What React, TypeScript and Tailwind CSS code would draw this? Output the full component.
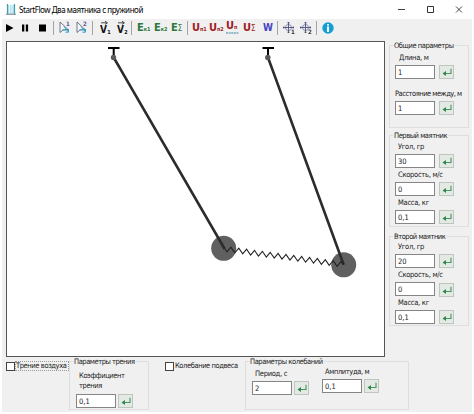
import type { ReactNode } from "react";

function EnterButton({ className = "" }: { className?: string }) {
  return (
    <button
      className={`flex h-[14px] w-[15px] shrink-0 items-center justify-center border border-[#bfc5bf] bg-[#e3e9e3] ${className}`}
    >
      <svg width="10" height="9" viewBox="0 0 10 9">
        <path d="M9 0.8V5.5H2.5" fill="none" stroke="#4b9362" strokeWidth="1.1" />
        <path d="M0.5 5.5L4 2.9V8.1Z" fill="#2f8550" />
      </svg>
    </button>
  );
}

type FieldProps = {
  label: string;
  value: string;
  labelClass?: string;
  className?: string;
  buttonClass?: string;
  gap?: string;
};

function Field({
  label,
  value,
  labelClass = "ml-[3px] tracking-[-0.28px]",
  className = "",
  buttonClass = "",
  gap = "gap-[4px]",
}: FieldProps) {
  return (
    <div className={`flex flex-col ${className}`}>
      <span className={`h-[12px] leading-[10px] whitespace-pre-line ${labelClass}`}>{label}</span>
      <div className={`flex ${gap}`}>
        <input
          defaultValue={value}
          className="h-[14px] w-[40px] shrink-0 border border-[#858585] bg-white px-[2px] leading-[10px] outline-none"
        />
        <EnterButton className={buttonClass} />
      </div>
    </div>
  );
}

function Group({
  title,
  titleClass = "tracking-[-0.45px]",
  className,
  children,
}: {
  title: string;
  titleClass?: string;
  className: string;
  children: ReactNode;
}) {
  return (
    <section className={`flex flex-col items-start border border-[#dedede] ${className}`}>
      <h2 className={`-mt-[5px] ml-[3px] h-[10px] bg-[#f0f0f0] px-px leading-[10px] ${titleClass}`}>
        {title}
      </h2>
      {children}
    </section>
  );
}

function CheckOption({
  label,
  focused = false,
  labelClass,
}: {
  label: string;
  focused?: boolean;
  labelClass: string;
}) {
  return (
    <label className="flex h-[10px] items-center">
      <span className="h-[9px] w-[9px] shrink-0 border border-[#444] bg-white" />
      <span
        className={`h-[10px] pl-px leading-[9px] ${labelClass} ${
          focused ? "outline-1 -outline-offset-1 outline-dotted outline-[#999]" : ""
        }`}
      >
        {label}
      </span>
    </label>
  );
}

function Separator({ className }: { className: string }) {
  return <span className={`h-[14px] w-px shrink-0 bg-[#a5a5a5] ${className}`} />;
}

// Letter with a small index, used for the energy toggles
function Symbol({
  letter,
  index,
  underline = false,
}: {
  letter: string;
  index: string;
  underline?: boolean;
}) {
  return (
    <button className="flex h-[14px] w-[17px] shrink-0 flex-col font-bold">
      <span className={`flex items-baseline ${underline ? "-mt-[2px]" : ""}`}>
        <span className="text-[11px] leading-[13px]">{letter}</span>
        <span
          className={
            index === "Σ"
              ? "text-[8px] leading-[8px] font-normal"
              : "text-[5.5px] leading-[6px] tracking-[-0.2px]"
          }
        >
          {index}
        </span>
      </span>
      {underline && (
        <svg width="13" height="2" className="shrink-0">
          <path d="M0 1H13" stroke="#3488a0" strokeWidth="1.2" strokeDasharray="2 0.6" />
        </svg>
      )}
    </button>
  );
}

function CursorIcon({ index }: { index: string }) {
  return (
    <svg width="13" height="14" viewBox="0 0 13 14" className="shrink-0">
      <path d="M1 1V11.5L4 9L9 8.5Z" fill="#f4f8fa" stroke="#4c5770" strokeWidth="0.8" />
      <path d="M3.5 8.8H8.5M5 5.5L9.5 11M9.5 8V11.2H6.5" fill="none" stroke="#32a2c9" strokeWidth="1" />
      <text x="7" y="5" fontSize="6" fontWeight="bold" fill="#65539c">
        {index}
      </text>
    </svg>
  );
}

function VectorIcon({ index }: { index: string }) {
  return (
    <svg width="13" height="14" viewBox="0 0 13 14" className="shrink-0 overflow-visible">
      <path d="M1 1.8H6.5M5 0.2L7.5 1.8L5 3.4" fill="none" stroke="#222" strokeWidth="0.8" />
      <text x="0" y="11.5" fontSize="10" fontWeight="bold" fill="#111">
        V
      </text>
      <text x="7.2" y="12.6" fontSize="5.5" fontWeight="bold" fill="#111">
        {index}
      </text>
    </svg>
  );
}

function TargetIcon({ index }: { index: string }) {
  return (
    <svg width="13" height="14" viewBox="0 0 13 14" className="shrink-0 overflow-visible">
      <circle cx="5.5" cy="6.5" r="3" fill="none" stroke="#7477a0" strokeWidth="0.8" />
      <path
        d="M0 6.5H11M5.5 1V12M1.2 5.5L0 6.5L1.2 7.5M9.8 5.5L11 6.5L9.8 7.5M4.5 2.2L5.5 1L6.5 2.2M4.5 10.8L5.5 12L6.5 10.8"
        fill="none"
        stroke="#3a3f72"
        strokeWidth="0.8"
      />
      <text x="8" y="13" fontSize="6" fontWeight="bold" fill="#333">
        {index}
      </text>
    </svg>
  );
}

function TitleBar() {
  return (
    <header className="flex h-[19px] shrink-0 bg-white pl-[6px] font-['Noto_Sans','Liberation_Sans',sans-serif]">
      <svg width="10" height="11" viewBox="0 0 10 11" className="mt-[4px] shrink-0">
        <path d="M1 1H9V10H1Z" fill="#b9dfeb" />
        <path d="M1.5 0V10M8.5 0V10" stroke="#429bb6" strokeWidth="1.2" />
        <path d="M3.5 1V9M6 1V9" stroke="#e9f7fb" strokeWidth="1" />
        <path d="M0 10.3H10" stroke="#5a6c73" strokeWidth="0.8" />
      </svg>
      <h1 className="mt-[4px] ml-[3px] text-[8px] leading-[12px] tracking-[-0.45px] whitespace-nowrap text-black">
        StartFlow Два маятника с пружиной
      </h1>
      <svg width="66" height="10" viewBox="0 0 66 10" className="mt-[4px] mr-[10px] ml-auto shrink-0">
        <path d="M0 5.5H7" stroke="#444" />
        <path d="M29.5 2.5H35.5V8.5H29.5Z" fill="none" stroke="#333" />
        <path d="M58 2.5L64 8.5M64 2.5L58 8.5" stroke="#333" strokeWidth="0.9" />
      </svg>
    </header>
  );
}

function Toolbar() {
  return (
    <nav className="flex h-[22px] shrink-0 items-start pt-[2px] pl-[4px] font-['DejaVu_Sans_Condensed','DejaVu_Sans',sans-serif]">
      <svg width="42" height="14" viewBox="0 0 42 14" className="shrink-0">
        <path d="M0 3V11L7.5 7Z" />
        <path d="M16 3.5H18.3V10.5H16ZM19.8 3.5H22.1V10.5H19.8Z" />
        <path d="M33 3.5H40V10.5H33Z" />
      </svg>
      <Separator className="ml-[5px]" />
      <div className="ml-[5px] flex gap-[4px]">
        <CursorIcon index="1" />
        <CursorIcon index="2" />
      </div>
      <Separator className="ml-[3px]" />
      <div className="ml-[7px] flex gap-[4px]">
        <VectorIcon index="1" />
        <VectorIcon index="2" />
      </div>
      <Separator className="ml-px" />
      <div className="ml-[5px] flex text-[#2d783c]">
        <Symbol letter="E" index="к1" />
        <Symbol letter="E" index="к2" />
        <Symbol letter="E" index="Σ" />
      </div>
      <Separator className="-ml-px" />
      <div className="ml-[4px] flex text-[#a01e24]">
        <Symbol letter="U" index="п1" />
        <Symbol letter="U" index="п2" />
        <Symbol letter="U" index="п" underline />
        <Symbol letter="U" index="Σ" />
        <button className="ml-[2px] h-[14px] w-[12px] text-[10px] leading-[14px] font-bold text-[#4543c4]">
          W
        </button>
      </div>
      <Separator className="ml-[3px]" />
      <div className="ml-[5px] flex gap-[4px]">
        <TargetIcon index="1" />
        <TargetIcon index="2" />
      </div>
      <Separator className="ml-[3px]" />
      <svg width="12" height="12" viewBox="0 0 12 12" className="mt-px ml-[5px] shrink-0">
        <circle cx="6" cy="6" r="5.7" fill="#139fd3" />
        <path d="M6 2V3.4M6 4.4V10" stroke="#fff" strokeWidth="2" />
      </svg>
    </nav>
  );
}

// Zigzag between the two bobs
const TEETH = 30;
const spring = Array.from({ length: TEETH }, (_, i) => {
  const t = (i + 0.5) / TEETH;
  const x = 225 + 118 * t;
  const y = 249 + 15.5 * t + (i % 2 === 0 ? 2.6 : -2.6);
  return `${x.toFixed(1)},${y.toFixed(1)}`;
}).join(" ");

function PendulumScene() {
  return (
    <svg
      viewBox="7 42 377 314"
      className="h-[316px] w-[379px] shrink-0 border border-[#555] bg-white"
    >
      <circle cx="223.7" cy="248.3" r="12.5" fill="#606060" />
      <circle cx="343.7" cy="264.8" r="12.5" fill="#606060" />
      <g stroke="#000" strokeWidth="2">
        <path d="M108 48H119.5M113.7 48V56M262.5 48H274M268 48V56" />
      </g>
      <g stroke="#2c2c2c" strokeWidth="2.6">
        <path d="M113.7 57.5L224.7 249M268 57.5L343.7 264.8" />
      </g>
      <circle cx="113.5" cy="57.5" r="2.7" fill="#5b5b5b" />
      <circle cx="267.8" cy="57.5" r="2.7" fill="#5b5b5b" />
      <polyline points={`225,249 ${spring} 343.5,264.5`} fill="none" stroke="#222" strokeWidth="1.1" />
    </svg>
  );
}

export default function App() {
  return (
    <div className="flex h-[414px] w-[474px] flex-col overflow-hidden bg-white font-['DejaVu_Sans_Condensed','DejaVu_Sans',sans-serif] text-[7.5px] text-[#222]">
      <TitleBar />
      <main className="mr-[2px] ml-[2px] flex h-[393px] flex-col bg-[#f0f0f0]">
        <Toolbar />
        <div className="flex h-[316px] shrink-0 pl-[4px]">
          <PendulumScene />
          <aside className="ml-[4px] flex flex-col pt-[4px] whitespace-nowrap">
            <Group title="Общие параметры" className="h-[83px] w-[80px]">
              <Field
                label="Длина, м"
                value="1"
                className="mt-[2px] ml-[5px]"
                labelClass="ml-[4px] tracking-[-0.3px]"
              />
              <Field
                label="Расстояние между, м"
                value="1"
                className="mt-[10px] ml-[5px]"
                labelClass="tracking-[-0.5px]"
              />
            </Group>
            <Group title="Первый маятник" className="mt-[7px] h-[92px] w-[80px]">
              <Field label="Угол, гр" value="30" className="mt-px ml-[5px]" />
              <Field label="Скорость, м/с" value="0" className="mt-[2px] ml-[5px]" />
              <Field label="Масса, кг" value="0,1" className="mt-[2px] ml-[5px]" />
            </Group>
            <Group title="Второй маятник" className="mt-[9px] h-[90px] w-[80px]">
              <Field label="Угол, гр" value="20" className="ml-[5px]" />
              <Field label="Скорость, м/с" value="0" className="mt-[2px] ml-[5px]" buttonClass="mt-px -mb-px" />
              <Field label="Масса, кг" value="0,1" className="mt-[2px] ml-[5px]" />
            </Group>
          </aside>
        </div>
        <footer className="flex items-start pt-[4px] pl-[4px] whitespace-nowrap">
          <CheckOption label="Трение воздуха" focused labelClass="w-[54px] tracking-[-0.4px]" />
          <Group title="Параметры трения" className="h-[49px] w-[80px]">
            <Field
              label={"Коэффициент\nтрения"}
              value="0,1"
              className="mt-[4px] ml-[6px]"
              labelClass="mb-[11px] ml-[3px] tracking-[-0.4px]"
              gap="gap-[2px]"
            />
          </Group>
          <div className="ml-[16px]">
            <CheckOption label="Колебание подвеса" labelClass="w-[71px] tracking-[-0.42px]" />
          </div>
          <Group title="Параметры колебаний" titleClass="tracking-[-0.42px]" className="h-[49px] w-[164px]">
            <div className="ml-[6px] flex gap-[13px]">
              <Field label="Период, с" value="2" className="mt-[2px]" gap="gap-[2px]" />
              <Field
                label="Амплитуда, м"
                value="0,1"
                labelClass="ml-[3px] tracking-[-0.4px]"
                gap="gap-[2px]"
              />
            </div>
          </Group>
        </footer>
      </main>
    </div>
  );
}
